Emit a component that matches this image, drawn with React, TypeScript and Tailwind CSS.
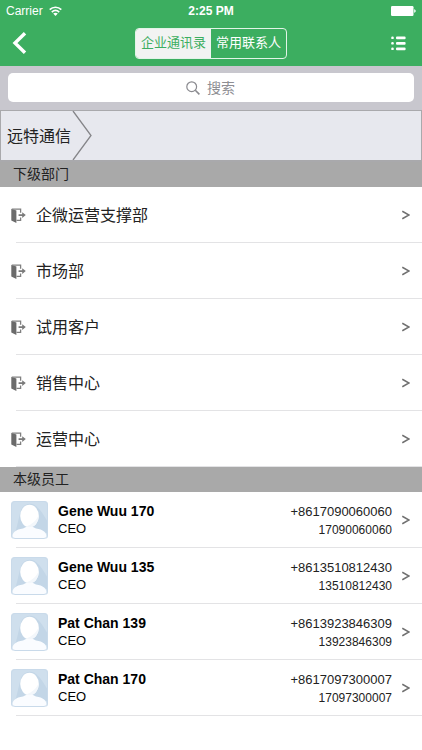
const departments = ["企微运营支撑部", "市场部", "试用客户", "销售中心", "运营中心"];

const employees = [
  { name: "Gene Wuu 170", title: "CEO", phone: "+8617090060060", mobile: "17090060060" },
  { name: "Gene Wuu 135", title: "CEO", phone: "+8613510812430", mobile: "13510812430" },
  { name: "Pat Chan 139", title: "CEO", phone: "+8613923846309", mobile: "13923846309" },
  { name: "Pat Chan 170", title: "CEO", phone: "+8617097300007", mobile: "17097300007" },
];

function WifiIcon() {
  return (
    <svg width="13" height="10" viewBox="0 0 13 10" fill="none" stroke="#fff" strokeWidth="1.7">
      <path d="M0.7 3.7C4 0.4 9 0.4 12.3 3.7" />
      <path d="M2.8 6.1C5 4 8 4 10.2 6.1" />
      <path d="M4.2 7.6C5.5 6.4 7.5 6.4 8.8 7.6L6.5 10Z" fill="#fff" stroke="none" />
    </svg>
  );
}

function BatteryIcon() {
  return (
    <svg width="25" height="10" viewBox="0 0 25 10" fill="#fff">
      <rect width="22.5" height="10" rx="1.2" />
      <path d="M23.2 3.2C25.2 3.6 25.2 6.4 23.2 6.8Z" />
    </svg>
  );
}

function ListIcon() {
  return (
    <svg width="15" height="15" viewBox="0 0 15 15" fill="#fff">
      {[0.5, 6, 11.5].map((y) => (
        <g key={y}>
          <rect x="0.2" y={y} width="2.6" height="2.6" rx="1.2" />
          <rect x="5" y={y} width="9.6" height="2.8" rx="1" />
        </g>
      ))}
    </svg>
  );
}

function DoorIcon() {
  return (
    <svg width="15" height="15" viewBox="0 0 15 15" className="shrink-0">
      <path d="M0.3 0.8L5.4 2.6V15L0.3 12.6Z" fill="#6b6b6b" />
      <path d="M1 1.2H9.6V4.8M9.6 9.5V12.3H5.5" fill="none" stroke="#808080" strokeWidth="1.3" />
      <path d="M7.6 6.3H11.2V4.2L14.8 7.1L11.2 10V7.9H7.6Z" fill="#7a7a7a" />
    </svg>
  );
}

function Avatar() {
  return (
    <svg width="37" height="38" viewBox="0 0 37 38" className="shrink-0">
      <clipPath id="avatar">
        <rect width="37" height="38" rx="3.5" />
      </clipPath>
      <g clipPath="url(#avatar)">
        <rect width="37" height="38" fill="#cfdfed" />
        <path d="M11 7C16 1 23 2 27 7C31 10 34 17 37 21V32H4C7 24 8 13 11 7Z" fill="#c3d6e7" />
        <path d="M1 38C1 31 5 28.5 12 27.5L15 26H22L25 27.5C32 28.5 36 31 36 38Z" fill="#fafcff" />
        <ellipse cx="18.5" cy="15" rx="9.3" ry="11.3" fill="#fff" />
        <path d="M18.5 26.3C25 25.5 27.8 20 27.8 14C25.5 19 22 23 15 25.6Z" fill="#f3f7fb" />
      </g>
      <rect x="0.5" y="0.5" width="36" height="37" rx="3.5" fill="none" stroke="#c9daea" />
    </svg>
  );
}

function Chevron() {
  return (
    <svg width="8" height="10" viewBox="0 0 8 10" fill="none" stroke="#707070" strokeWidth="1.5" className="shrink-0">
      <path d="M0.3 1.2L7 5L0.3 8.8" />
    </svg>
  );
}

function SectionTitle({ children }: { children: string }) {
  return (
    <h2 className="flex h-[25px] items-center bg-[#a9a9a9] px-[13px] pb-0.5 text-[14px] leading-5 text-[#222]">
      {children}
    </h2>
  );
}

export default function App() {
  return (
    <div className="min-h-screen w-full bg-white font-['Liberation_Sans','Noto_Sans_CJK_SC',sans-serif] text-black">
      {/* Header */}
      <header className="bg-[#3cae60] text-white">
        <div className="grid h-[22px] grid-cols-3 items-center px-1.5 text-[12px]">
          <div className="flex items-center gap-1.5">
            Carrier
            <WifiIcon />
          </div>
          <div className="text-center font-bold">2:25 PM</div>
          <div className="flex justify-end">
            <BatteryIcon />
          </div>
        </div>
        <div className="grid h-11 grid-cols-[1fr_auto_1fr] items-center px-3 pb-0.5">
          <button aria-label="返回" className="justify-self-start">
            <svg width="15" height="22" viewBox="0 0 15 22" fill="none" stroke="#fff" strokeWidth="3.4">
              <path d="M13 1.2L3 11L13 20.8" />
            </svg>
          </button>
          <div className="flex h-[31px] overflow-hidden rounded border border-[#e2f4e7] text-[13px]">
            <button className="w-[75px] bg-[#f2f3f2] text-[#3cae60]">企业通讯录</button>
            <button className="w-[75px]">常用联系人</button>
          </div>
          <button aria-label="列表" className="justify-self-end px-1">
            <ListIcon />
          </button>
        </div>
      </header>

      {/* Search */}
      <div className="h-11 bg-[#c8c7ce] px-2 py-[7px]">
        <label className="relative block">
          <svg
            width="14"
            height="14"
            viewBox="0 0 14 14"
            fill="none"
            stroke="#8a8a8f"
            strokeWidth="1.2"
            className="absolute top-2 left-1/2 -ml-[25px]"
          >
            <circle cx="5.7" cy="5.7" r="4.9" />
            <path d="M9.3 9.3L13.4 13.4" strokeWidth="1.6" />
          </svg>
          <input
            type="text"
            aria-label="搜索"
            placeholder="搜索"
            className="h-[29px] w-full rounded-[5px] bg-white pl-5 text-center text-[14px] placeholder:text-[#8e8e93]"
          />
        </label>
      </div>

      {/* Breadcrumb */}
      <nav className="flex h-[52px] items-stretch border border-b-2 border-[#a9a9ac] bg-[#e7e8ee]">
        <a href="#" className="flex items-center pt-0.5 pl-1.5 text-[16px] text-[#222]">
          远特通信
        </a>
        <svg width="22" height="49" viewBox="0 0 22 49" fill="none" stroke="#858588" strokeWidth="1.3">
          <path d="M2 0L20 24.5L2 49" />
        </svg>
      </nav>

      <SectionTitle>下级部门</SectionTitle>
      <ul>
        {departments.map((name) => (
          <li key={name}>
            <a href="#" className="flex h-14 items-center gap-2.5 pr-3 pl-[11px] text-[16px] text-[#222]">
              <DoorIcon />
              <span className="flex-1 pt-0.5">{name}</span>
              <Chevron />
            </a>
            <div className="-mt-px ml-4 h-px bg-[#e3e3e5]" />
          </li>
        ))}
      </ul>

      <SectionTitle>本级员工</SectionTitle>
      <ul>
        {employees.map((person) => (
          <li key={person.name}>
            <a href="#" className="flex h-14 items-center gap-2.5 pr-3 pl-[11px]">
              <Avatar />
              <div className="flex-1">
                <div className="text-[14px] leading-[18px] font-bold">{person.name}</div>
                <div className="text-[13px] leading-[18px]">{person.title}</div>
              </div>
              <div className="pt-0.5 text-right text-[#222]">
                <div className="text-[13px] leading-[18px]">{person.phone}</div>
                <div className="text-[12px] leading-[18px]">{person.mobile}</div>
              </div>
              <Chevron />
            </a>
            <div className="-mt-px ml-4 h-px bg-[#e3e3e5]" />
          </li>
        ))}
      </ul>
    </div>
  );
}
